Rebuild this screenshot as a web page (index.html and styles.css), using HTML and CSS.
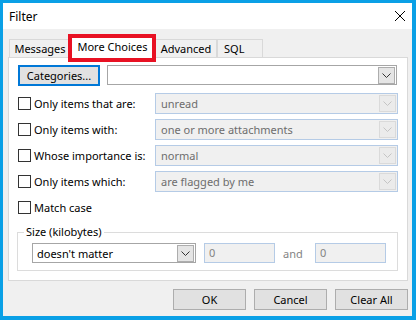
FILE: index.html
```html
<!DOCTYPE html>
<html lang="en">
<head>
    <meta charset="UTF-8">
    <meta name="viewport" content="width=device-width, initial-scale=1.0">
    <title>Filter</title>

    <link rel="stylesheet" href="styles.css">
</head>
<body>
    <div class="window">
        <div class="titlebar">
            <span class="title">Filter</span>
            <svg class="close" width="10" height="10" viewBox="0 0 10 10"><path d="M0 0L10 10M10 0L0 10" stroke="#000" stroke-width="1"/></svg>
        </div>

        <div class="dialog">
            <ul class="tabs">
                <li class="tab messages">Messages</li>
                <li class="tab active">More Choices<span class="mark"></span></li>
                <li class="tab advanced">Advanced</li>
                <li class="tab sql">SQL</li>
            </ul>

            <div class="panel">
                <div class="row first">
                    <a href="#categories" class="btn focus categories">Categories...</a>
                    <div class="combo wide"><span class="val"></span><span class="drop"><svg width="9" height="5" viewBox="0 0 9 5"><path d="M0.5 0.5L4.5 4.5L8.5 0.5" fill="none" stroke="#333" stroke-width="1"/></svg></span></div>
                </div>

                <div class="row">
                    <label class="check"><span class="box"></span>Only items that are:</label>
                    <div class="combo off"><span class="val">unread</span><span class="drop"><svg width="9" height="5" viewBox="0 0 9 5"><path d="M0.5 0.5L4.5 4.5L8.5 0.5" fill="none" stroke="#c4c4c4" stroke-width="1"/></svg></span></div>
                </div>
                <div class="row">
                    <label class="check"><span class="box"></span>Only items with:</label>
                    <div class="combo off"><span class="val">one or more attachments</span><span class="drop"><svg width="9" height="5" viewBox="0 0 9 5"><path d="M0.5 0.5L4.5 4.5L8.5 0.5" fill="none" stroke="#c4c4c4" stroke-width="1"/></svg></span></div>
                </div>
                <div class="row">
                    <label class="check"><span class="box"></span>Whose importance is:</label>
                    <div class="combo off"><span class="val">normal</span><span class="drop"><svg width="9" height="5" viewBox="0 0 9 5"><path d="M0.5 0.5L4.5 4.5L8.5 0.5" fill="none" stroke="#c4c4c4" stroke-width="1"/></svg></span></div>
                </div>
                <div class="row">
                    <label class="check"><span class="box"></span>Only items which:</label>
                    <div class="combo off"><span class="val">are flagged by me</span><span class="drop"><svg width="9" height="5" viewBox="0 0 9 5"><path d="M0.5 0.5L4.5 4.5L8.5 0.5" fill="none" stroke="#c4c4c4" stroke-width="1"/></svg></span></div>
                </div>
                <div class="row">
                    <label class="check"><span class="box"></span>Match case</label>
                </div>

                <fieldset class="group">
                    <legend>Size (kilobytes)</legend>
                    <div class="sizes">
                        <div class="combo size"><span class="val">doesn't matter</span><span class="drop"><svg width="9" height="5" viewBox="0 0 9 5"><path d="M0.5 0.5L4.5 4.5L8.5 0.5" fill="none" stroke="#333" stroke-width="1"/></svg></span></div>
                        <div class="field">0</div>
                        <span class="and">and</span>
                        <div class="field">0</div>
                    </div>
                </fieldset>
            </div>

            <div class="buttons">
                <a href="#ok" class="btn">OK</a>
                <a href="#cancel" class="btn">Cancel</a>
                <a href="#clear" class="btn">Clear All</a>
            </div>
        </div>
    </div>
</body>
</html>
```

FILE: styles.css
```css
body{
    margin: 0;
    width: 416px;
    height: 320px;
    overflow: hidden;
    background-color: #0aa0e6;
    font-family: "Noto Sans", "Open Sans", sans-serif;
    font-size: 11px;
    color: #000;
}
.window{
    margin: 3px 4px 0 3px;
    height: 313px;
    background-color: #f0f0f0;
}
.titlebar{
    height: 26px;
    background-color: #fff;
    display: flex;
    align-items: center;
    padding: 0 7px 0 6px;
    font-size: 12px;
}
.title{
    flex: 1;
}
.close{
    display: block;
}

.dialog{
    padding: 0 4px 0 5px;
}
ul.tabs{
    list-style: none;
    margin: 0;
    padding: 8px 0 0 1px;
    height: 20px;
    display: flex;
    align-items: flex-end;
}
li.tab{
    height: 17px;
    line-height: 17px;
    border: 1px solid #d9d9d9;
    border-bottom: none;
    text-align: center;
    background-color: #f0f0f0;
}
li.messages{
    width: 58px;
    padding-left: 1px;
    border-right: none;
}
li.advanced{
    width: 60px;
    border-left: none;
}
li.sql{
    width: 38px;
    padding-left: 6px;
    text-align: left;
    border-left: 1px solid #d9d9d9;
}
li.tab.active{
    position: relative;
    width: 85px;
    height: 21px;
    line-height: 19px;
    background-color: #fff;
    margin-bottom: -1px;
    z-index: 1;
}
.mark{
    position: absolute;
    left: -2px;
    top: -3px;
    width: 80px;
    height: 20px;
    border: 4px solid #e81123;
}

.panel{
    background-color: #fff;
    border: 1px solid #d9d9d9;
    padding: 6px 9px 9px 9px;
}
.row{
    display: flex;
    align-items: center;
    height: 21px;
    margin-top: 5px;
}
.row.first{
    height: 22px;
    margin: 0 0 7px 0;
}

.btn{
    display: inline-block;
    box-sizing: border-box;
    height: 21px;
    line-height: 19px;
    text-align: center;
    text-decoration: none;
    color: #000;
    background-color: #e1e1e1;
    border: 1px solid #adadad;
}
.btn.focus{
    border: 2px solid #0078d7;
    line-height: 17px;
}
.categories{
    width: 82px;
    height: 21px;
    margin-right: 7px;
}

.combo{
    box-sizing: border-box;
    height: 21px;
    display: flex;
    align-items: center;
    border: 1px solid #a6a6a6;
    background-color: #fff;
    padding: 0 1px 0 5px;
}
.combo .val{
    flex: 1;
    white-space: nowrap;
}
.combo .drop{
    box-sizing: border-box;
    width: 17px;
    height: 17px;
    display: flex;
    align-items: center;
    justify-content: center;
    border: 1px solid #adadad;
    background-color: #e5e5e5;
}
.combo.wide{
    width: 290px;
    height: 20px;
}
.combo.off{
    width: 243px;
    border-color: #b5cbe6;
    background-color: #f0f0f0;
    color: #6d6d6d;
}
.combo.off .drop{
    border-color: #dadada;
    background-color: #ebebeb;
}

label.check{
    flex: 1;
    display: flex;
    align-items: center;
}
.box{
    box-sizing: border-box;
    width: 13px;
    height: 13px;
    border: 1px solid #333;
    background-color: #fff;
    margin-right: 3px;
}

fieldset.group{
    box-sizing: border-box;
    width: 381px;
    margin: 6px 0 0 -1px;
    padding: 3px 9px 7px 14px;
    border: 1px solid #dcdcdc;
}
fieldset.group legend{
    padding: 0 2px;
    margin-left: -8px;
    line-height: 16px;
}
.sizes{
    display: flex;
    align-items: center;
}
.sizes > *{
    flex: none;
}
.combo.size{
    width: 164px;
    height: 20px;
    padding-left: 4px;
}
.field{
    box-sizing: border-box;
    width: 71px;
    height: 20px;
    line-height: 18px;
    margin-left: 8px;
    padding-left: 4px;
    border: 1px solid #b5cbe6;
    background-color: #f0f0f0;
    color: #838383;
}
.and{
    width: 19px;
    color: #838383;
    margin: 0 5px 0 8px;
}

.buttons{
    display: flex;
    justify-content: flex-end;
    gap: 8px;
    margin-top: 8px;
}
.buttons .btn{
    width: 73px;
}
```
